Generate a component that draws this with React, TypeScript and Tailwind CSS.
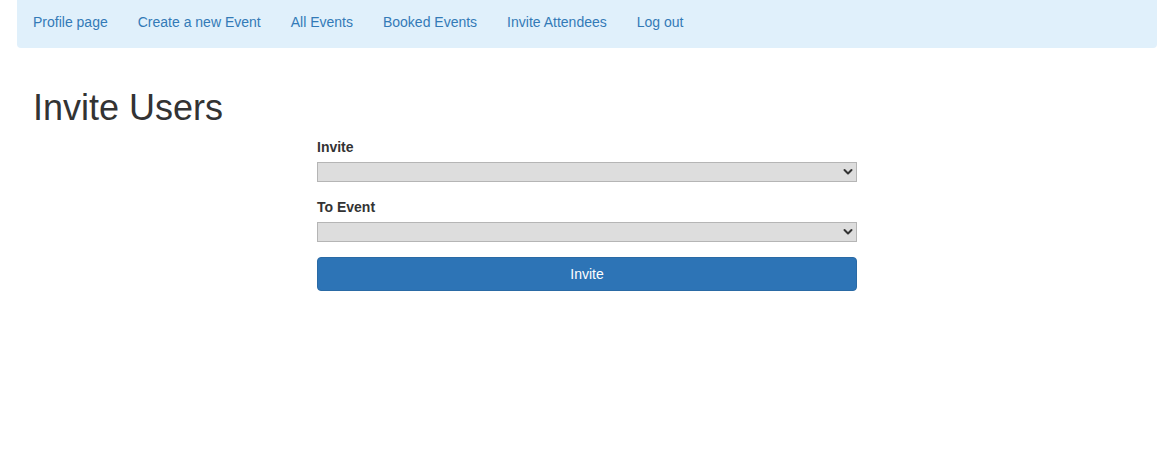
const links = ["Profile page", "Create a new Event", "All Events", "Booked Events", "Invite Attendees", "Log out"];

function SelectBox() {
  return (
    <div className="relative h-5 w-full">
      <select className="h-5 w-full appearance-none border border-[#b5b5b5] bg-[#dddddd] text-sm outline-none" />
      <svg
        className="pointer-events-none absolute right-[4px] top-[6px]"
        width="10"
        height="8"
        viewBox="0 0 10 8"
        fill="none"
      >
        <path d="M1.5 2 L5 5.5 L8.5 2" stroke="#333" strokeWidth="2" strokeLinecap="round" strokeLinejoin="round" />
      </svg>
    </div>
  );
}

export default function App() {
  return (
    <div className="min-h-[476px] bg-white text-sm text-[#333] [font-family:'Liberation_Sans',Arial,sans-serif]">
      <nav className="ml-[17px] mr-[10px] flex h-12 rounded-b-[4px] bg-[#e0f0fb] pl-px pt-3">
        {links.map((l) => (
          <a key={l} href="#" className="px-[15px] leading-5 text-[#337ab7]">
            {l}
          </a>
        ))}
      </nav>
      <h1 className="ml-[33px] mt-[40px] text-[36px] leading-[39.6px] font-normal">Invite Users</h1>
      <form className="ml-[317px] mt-[9px] flex w-[540px] flex-col">
        <label className="mb-[5px] font-bold leading-5">Invite</label>
        <SelectBox />
        <label className="mb-[5px] mt-[15px] font-bold leading-5">To Event</label>
        <SelectBox />
        <button
          type="button"
          className="mt-[15px] h-[34px] w-full rounded-[4px] border border-[#2a6aa5] bg-[#2d74b6] leading-5 text-white"
        >
          Invite
        </button>
      </form>
    </div>
  );
}
